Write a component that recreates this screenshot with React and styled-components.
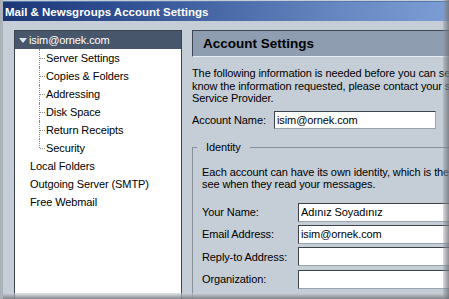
import React from "react";
import styled, { createGlobalStyle } from "styled-components";

const Global = createGlobalStyle`
  html, body { margin: 0; padding: 0; }
  body { font-family: "Liberation Sans", Arial, sans-serif; }
`;

const Window = styled.div`
  position: relative;
  width: 449px;
  height: 299px;
  box-sizing: border-box;
  overflow: hidden;
  display: flex;
  flex-direction: column;
  background: #c5cdd7;
  border-left: 3px solid #aab1b9;
  font-family: "Liberation Sans", Arial, sans-serif;
  font-size: 11px;
  letter-spacing: -0.1px;
  color: #000;

  &::before {
    content: "";
    position: absolute;
    left: 0;
    right: 0;
    bottom: 0;
    height: 6px;
    background: linear-gradient(to bottom, rgba(210, 214, 220, 0.6), rgba(120, 124, 130, 0.9));
    z-index: 2;
  }
  &::after {
    content: "";
    position: absolute;
    top: 0;
    bottom: 0;
    right: 0;
    width: 6px;
    background: linear-gradient(to right, rgba(150, 155, 162, 0.35), rgba(110, 114, 120, 0.8));
    z-index: 2;
  }
`;

const TitleBar = styled.div`
  flex: none;
  height: 19px;
  margin-top: 1px;
  display: flex;
  align-items: center;
  padding-left: 2px;
  background: linear-gradient(to right, #1c3675 0%, #2f4e91 25%, #4a6aa8 50%, #6787c2 75%, #7c9dd4 100%);
  border-top: 1px solid #5a78b0;
  color: #fff;
  font-weight: bold;
  font-size: 11.5px;
  letter-spacing: 0;
  white-space: nowrap;
`;

const Body = styled.div`
  flex: 1;
  min-height: 0;
  display: flex;
  gap: 10px;
  padding: 9px 0 0 11px;
`;

const Tree = styled.div`
  flex: none;
  width: 168px;
  box-sizing: border-box;
  background: #fff;
  border: 1px solid #3a4350;
  border-bottom: none;
`;

const TreeRow = styled.div`
  position: relative;
  height: 18px;
  display: flex;
  align-items: center;
  white-space: nowrap;
  padding-left: ${(p) => p.$indent}px;
  background: ${(p) => (p.$selected ? "#48566b" : "transparent")};
  color: ${(p) => (p.$selected ? "#fff" : "#000")};
  gap: 2px;
`;

const Twisty = styled.span`
  width: 0;
  height: 0;
  border-left: 4px solid transparent;
  border-right: 4px solid transparent;
  border-top: 5px solid #dfe4ea;
  margin-top: 1px;
`;

const ChildRow = styled(TreeRow)`
  &::before {
    content: "";
    position: absolute;
    left: 24px;
    top: 0;
    height: ${(p) => (p.$last ? "9px" : "18px")};
    border-left: 1px dotted #8a8a8a;
  }
  &::after {
    content: "";
    position: absolute;
    left: 25px;
    top: 9px;
    width: 5px;
    border-top: 1px dotted #8a8a8a;
  }
`;

const Right = styled.div`
  flex: none;
  width: 300px;
  display: flex;
  flex-direction: column;
`;

const PanelHeader = styled.div`
  flex: none;
  height: 27px;
  box-sizing: border-box;
  display: flex;
  align-items: center;
  padding-left: 10px;
  background: #8e9db0;
  border: 1px solid #3e4656;
  border-right-color: #e9edf2;
  border-bottom-color: #e9edf2;
  font-weight: bold;
  font-size: 13.5px;
  letter-spacing: 0;
  white-space: nowrap;
`;

const Para = styled.div`
  margin-top: ${(p) => p.$top}px;
  line-height: 12.5px;
  white-space: nowrap;
`;

const FormGrid = styled.div`
  display: grid;
  grid-template-columns: ${(p) => p.$label}px ${(p) => p.$field}px;
  grid-auto-rows: ${(p) => p.$row}px;
  row-gap: 3.4px;
  align-items: center;
  margin-top: ${(p) => p.$top}px;
`;

const Label = styled.label`
  white-space: nowrap;
`;

const Field = styled.input`
  box-sizing: border-box;
  width: 100%;
  height: 100%;
  margin: 0;
  padding: 0 2px;
  background: #fff;
  border: 1px solid #3c424a;
  border-bottom-color: #9aa2ac;
  border-right-color: #9aa2ac;
  font-family: "Liberation Sans", Arial, sans-serif;
  font-size: 11px;
  letter-spacing: -0.1px;
  color: #000;
  outline: none;
`;

const Group = styled.fieldset`
  flex: 1;
  min-width: 0;
  margin: 12px 0 0 0;
  padding: 0 0 0 4px;
  border: 1px solid #87909b;
  border-bottom: none;
`;

const Legend = styled.legend`
  padding: 0 9px;
  line-height: 13px;
`;

const GroupBody = styled.div`
  padding-left: 5px;
`;

const children = [
  "Server Settings",
  "Copies & Folders",
  "Addressing",
  "Disk Space",
  "Return Receipts",
  "Security",
];

const roots = ["Local Folders", "Outgoing Server (SMTP)", "Free Webmail"];

const identity = [
  ["Your Name:", "Adınız Soyadınız"],
  ["Email Address:", "isim@ornek.com"],
  ["Reply-to Address:", ""],
  ["Organization:", ""],
];

export default function App() {
  return (
    <>
      <Global />
      <Window>
        <TitleBar>Mail &amp; Newsgroups Account Settings</TitleBar>
        <Body>
          <Tree>
            <TreeRow $indent={4} $selected>
              <Twisty />
              isim@ornek.com
            </TreeRow>
            {children.map((c, i) => (
              <ChildRow key={c} $indent={31} $last={i === children.length - 1}>
                {c}
              </ChildRow>
            ))}
            {roots.map((r) => (
              <TreeRow key={r} $indent={15}>
                {r}
              </TreeRow>
            ))}
          </Tree>
          <Right>
            <PanelHeader>Account Settings</PanelHeader>
            <Para $top={10}>
              The following information is needed before you can send and receive mail. If you do not
              <br />
              know the information requested, please contact your system administrator or Internet
              <br />
              Service Provider.
            </Para>
            <FormGrid $label={82} $field={162} $row={18} $top={6}>
              <Label>Account Name:</Label>
              <Field readOnly defaultValue="isim@ornek.com" />
            </FormGrid>
            <Group>
              <Legend>Identity</Legend>
              <GroupBody>
                <Para $top={12}>
                  Each account can have its own identity, which is the information that other people
                  <br />
                  see when they read your messages.
                </Para>
                <FormGrid $label={96} $field={200} $row={19} $top={12}>
                  {identity.map(([l, v]) => (
                    <React.Fragment key={l}>
                      <Label>{l}</Label>
                      <Field readOnly defaultValue={v} />
                    </React.Fragment>
                  ))}
                </FormGrid>
              </GroupBody>
            </Group>
          </Right>
        </Body>
      </Window>
    </>
  );
}
